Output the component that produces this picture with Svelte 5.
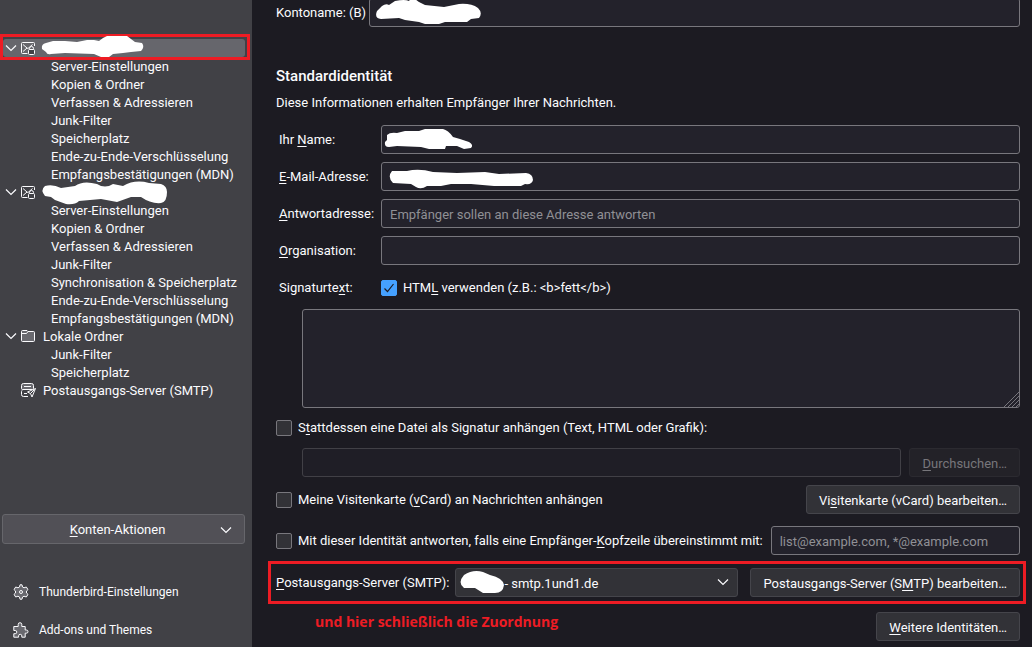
<script lang="ts">
	type Account = {
		name: string;
		icon: 'mail' | 'folder' | 'outgoing';
		scribble?: string;
		selected?: boolean;
		pages: string[];
	};

	const accounts: Account[] = [
		{
			name: '',
			icon: 'mail',
			scribble:
				'M3 4 L10 2 L22 2 L34 3 L44 1 L51 1 L56 2 L60 -1 L64 -3 L84 -3 L92 3 L99 4 Q102 8 98 12 L88 13 L80 14 L70 15 L66 18 L58 18 L51 15 L22 14 L8 15 Q4 16 3 13 L-1 10 Q-2 5 3 4Z',
			selected: true,
			pages: [
				'Server-Einstellungen',
				'Kopien & Ordner',
				'Verfassen & Adressieren',
				'Junk-Filter',
				'Speicherplatz',
				'Ende-zu-Ende-Verschlüsselung',
				'Empfangsbestätigungen (MDN)'
			]
		},
		{
			name: '',
			icon: 'mail',
			scribble:
				'M2 3 Q10 1 18 5 L32 3 Q40 -3 54 1 Q62 6 70 1 L80 3 Q92 -4 106 0 L118 1 Q124 3 124 9 Q124 19 118 20 Q108 21 98 14 L88 14 L74 19 L58 16 L36 18 Q32 22 23 21 L12 17 L8 14 L2 13 Q-3 7 2 3Z',
			pages: [
				'Server-Einstellungen',
				'Kopien & Ordner',
				'Verfassen & Adressieren',
				'Junk-Filter',
				'Synchronisation & Speicherplatz',
				'Ende-zu-Ende-Verschlüsselung',
				'Empfangsbestätigungen (MDN)'
			]
		},
		{ name: 'Lokale Ordner', icon: 'folder', pages: ['Junk-Filter', 'Speicherplatz'] },
		{ name: 'Postausgangs-Server (SMTP)', icon: 'outgoing', pages: [] }
	];

	let accountName = $state('');
	let fullName = $state('');
	let email = $state('');
	let replyTo = $state('');
	let organisation = $state('');
	let signature = $state('');
	let signatureFile = $state('');
	let catchAll = $state('');
	let useHtml = $state(true);
	let attachFile = $state(false);
	let attachVCard = $state(false);
	let useCatchAll = $state(false);
	let smtp = $state('smtp.1und1.de');
</script>

{#snippet chevron()}
	<svg class="chevron" width="12" height="8" viewBox="0 0 12 8" aria-hidden="true">
		<path d="M1 1.5 L6 6.5 L11 1.5" />
	</svg>
{/snippet}

{#snippet scribble(d: string)}
	<svg class="scribble" width="1" height="1" aria-hidden="true"><path {d} /></svg>
{/snippet}

<div class="page">
	<aside>
		<nav class="tree">
			{#each accounts as account}
				<a href="#konto" class="account" class:selected={account.selected} aria-label={account.name || 'Konto'}>
					<span class="twisty">
						{#if account.pages.length}{@render chevron()}{/if}
					</span>
					<svg class="icon" width="16" height="16" viewBox="0 0 16 16" aria-hidden="true">
						{#if account.icon === 'mail'}
							<path d="M7.500 13.500H2.500a1 1 0 0 1-1-1v-9a1 1 0 0 1 1-1h11a1 1 0 0 1 1 1V6" />
							<path d="M3 4.500l4 3.500L3 11.500M7 8l1 .5L12.500 4.500" />
							<rect class="solid" x="8.500" y="9.500" width="6" height="5" rx="1" />
							<path d="M9.500 9.500V8.500a2 2 0 0 1 4 0v1" />
						{:else if account.icon === 'folder'}
							<path
								class="tint"
								d="M1.500 3.500v9a1 1 0 0 0 1 1h11a1 1 0 0 0 1-1v-8a1 1 0 0 0-1-1H8l-1-1H2.500a1 1 0 0 0-1 1z"
							/>
							<path d="M2 5.500h4.500L8 3.500" />
						{:else}
							<path
								class="tint"
								d="M3.500 1.500h8a2 2 0 0 1 2 2v3l-1 1h-10a1 1 0 0 1-1-1v-3a2 2 0 0 1 2-2z"
							/>
							<path d="M4 4.500h7M4 11.500h3M8 14.500H3.500a2 2 0 0 1-2-2v-3a2 2 0 0 1 1-1.500" />
							<path class="solid" d="M15.500 6.500L7.500 10l3 1.500 1.500 3.500z" />
							<path d="M10.500 11.500l4-4" />
						{/if}
					</svg>
					<span class="name">
						{#if account.scribble}{@render scribble(account.scribble)}{/if}{account.name}
					</span>
				</a>
				{#each account.pages as page}
					<a href="#seite" class="subpage">{page}</a>
				{/each}
			{/each}
			<div class="mark"></div>
		</nav>

		<button class="actions" type="button">
			<span><u>K</u>onten-Aktionen</span>
			{@render chevron()}
		</button>

		<div class="links">
			<a href="#einstellungen">
				<svg class="icon" width="16" height="16" viewBox="0 0 16 16" aria-hidden="true">
					<path
						class="tint"
						d="M6.500 3L7 .8h2L9.500 3l1.500.8 2.300-.8 1.700 2.600L13.500 7v2l1.500 1.400-1.700 2.600-2.300-.8-1.500.8L9 15.200H7L6.500 13 5 12.200l-2.300.8L1 10.400 2.500 9V7L1 5.600 2.700 3l2.300.8z"
					/>
					<circle cx="8" cy="8" r="1.500" />
				</svg>
				Thunderbird-Einstellungen
			</a>
			<a href="#addons">
				<svg class="icon" width="16" height="16" viewBox="0 0 16 16" aria-hidden="true">
					<path
						class="tint"
						d="M.8 4.500h4.400V2.500a1.800 1.800 0 1 1 3.600 0v2h3.400v3.500h1.200a1.600 1.600 0 1 1 0 3.200h-1.200v4H8.800v-1.300a1.500 1.500 0 0 0-3.200 0v1.300H.8v-3.500h1.400a1.600 1.600 0 0 0 0-3.200H.8z"
					/>
				</svg>
				Add-ons und Themes
			</a>
		</div>
	</aside>

	<main>
		<div class="row top">
			<label for="account-name">Kontoname: (B)</label>
			<div class="field">
				<input id="account-name" type="text" bind:value={accountName} />
				{@render scribble(
					'M13 8 Q17 5 20 7 L26 3 Q36 1 40 3 Q43 -2 50 4 L56 7 L75 9 L90 6 Q102 5 109 10 Q114 15 110 20 L102 21 L98 24 L76 24 L70 26 H56 L50 24 L36 22 L30 20 L12 21 Q5 20 8 13Z'
				)}
			</div>
		</div>

		<h1>Standardidentität</h1>
		<p>Diese Informationen erhalten Empfänger Ihrer Nachrichten.</p>

		<div class="identity">
			<label for="name">Ihr <u>N</u>ame:</label>
			<div class="field">
				<input id="name" type="text" bind:value={fullName} />
				{@render scribble(
					'M6 10 Q9 7 16 8 L24 6 L38 6 L44 4 H62 Q67 5 72 12 L79 14 L88 17 Q93 20 90 23 L83 24 L76 21 L65 21 L64 24 H48 L40 22 L16 21 L8 22 Q3 22 4 17 L6 15Z'
				)}
			</div>

			<label for="email"><u>E</u>-Mail-Adresse:</label>
			<div class="field">
				<input id="email" type="email" bind:value={email} />
				{@render scribble(
					'M11 9 L26 9 Q38 6 52 10 L76 11 L104 10 L118 12 L145 11 Q152 12 152 18 Q151 23 144 22 L140 24 L113 24 L90 22 H70 L60 24 L46 24 Q40 28 35 25 L30 22 L12 21 Q6 15 11 9Z'
				)}
			</div>

			<label for="reply-to"><u>A</u>ntwortadresse:</label>
			<input
				id="reply-to"
				type="text"
				placeholder="Empfänger sollen an diese Adresse antworten"
				bind:value={replyTo}
			/>

			<label for="organisation"><u>O</u>rganisation:</label>
			<input id="organisation" type="text" bind:value={organisation} />

			<label for="signature">Signaturte<u>x</u>t:</label>
			<label class="check">
				<input type="checkbox" bind:checked={useHtml} />
				<span>HTM<u>L</u> verwenden (z.B.: &lt;b&gt;fett&lt;/b&gt;)</span>
			</label>
		</div>

		<div class="field signature">
			<textarea id="signature" bind:value={signature}></textarea>
			<svg class="grip" width="15" height="15" viewBox="0 0 15 15" aria-hidden="true">
				<path d="M0 15L15 0M4 15L15 4M8 15L15 8M12 15L15 12" />
			</svg>
		</div>

		<label class="check">
			<input type="checkbox" bind:checked={attachFile} />
			<span>S<u>t</u>attdessen eine Datei als Signatur anhängen (Text, HTML oder Grafik):</span>
		</label>

		<div class="row file">
			<input type="text" aria-label="Signaturdatei" disabled bind:value={signatureFile} />
			<button type="button" disabled><u>D</u>urchsuchen…</button>
		</div>

		<div class="row vcard">
			<label class="check">
				<input type="checkbox" bind:checked={attachVCard} />
				<span>Meine Visitenkarte (<u>v</u>Card) an Nachrichten anhängen</span>
			</label>
			<button type="button">Vi<u>s</u>itenkarte (vCard) bearbeiten…</button>
		</div>

		<div class="row catch-all">
			<label class="check">
				<input type="checkbox" bind:checked={useCatchAll} />
				<span>Mit dieser Identität antworten, falls eine Empfänger-<u>K</u>opfzeile übereinstimmt mit:</span>
			</label>
			<input
				type="text"
				aria-label="Empfänger-Kopfzeile"
				placeholder="list@example.com, *@example.com"
				bind:value={catchAll}
			/>
		</div>

		<div class="row smtp">
			<label for="smtp"><u>P</u>ostausgangs-Server (SMTP):</label>
			<div class="field">
				<select id="smtp" bind:value={smtp}>
					<option value="smtp.1und1.de">- smtp.1und1.de</option>
				</select>
				{@render scribble(
					'M9 7 Q18 1 28 4 L35 7 Q48 10 49 17 Q48 25 40 25 H28 L20 20 L9 20 Q2 15 9 7Z'
				)}
				{@render chevron()}
			</div>
			<button type="button">Postausgangs-Server (S<u>M</u>TP) bearbeiten…</button>
			<div class="mark"></div>
		</div>

		<div class="row more">
			<span class="note">und hier schließlich die Zuordnung</span>
			<button type="button"><u>W</u>eitere Identitäten…</button>
		</div>
	</main>
</div>

<style>
	:global(body) {
		background: #1c1b22;
	}

	.page {
		display: grid;
		grid-template-columns: 252px 1fr;
		height: 100vh;
		overflow: hidden;
		color: #fbfbfe;
		font: 13px/19px Roboto, 'Noto Sans', sans-serif;
	}

	a {
		color: inherit;
		text-decoration: none;
	}

	u {
		text-underline-offset: 2px;
		text-decoration-skip-ink: none;
	}

	aside {
		display: flex;
		flex-direction: column;
		background: #414146;
	}

	.tree {
		position: relative;
		flex: 1;
		display: flex;
		flex-direction: column;
		padding-top: 39px;
		line-height: 20px;
	}

	.account {
		display: flex;
		align-items: center;
		height: 18px;
		margin: 0 7px 0 3px;
		border-radius: 3px;
	}

	.account.selected {
		background: #66666c;
	}

	.twisty {
		display: flex;
		width: 17px;
		padding-left: 2px;
		box-sizing: border-box;
	}

	.name {
		position: relative;
		height: 18px;
		margin-left: 7px;
	}

	.subpage {
		height: 18px;
		padding-left: 51px;
		white-space: nowrap;
	}

	.icon {
		flex: none;
		fill: none;
		stroke: #fbfbfe;
		stroke-width: 1;
	}

	.tint {
		fill: #69696f;
	}

	.solid {
		fill: #414146;
	}

	.chevron {
		flex: none;
		fill: none;
		stroke: #fbfbfe;
		stroke-width: 1.2;
	}

	.scribble {
		position: absolute;
		top: 0;
		left: 0;
		overflow: visible;
		fill: #fff;
		pointer-events: none;
		z-index: 1;
	}

	.mark {
		position: absolute;
		border: 3px solid #ed1c24;
		pointer-events: none;
	}

	.tree .mark {
		inset: 34px 2px auto 0;
		height: 20px;
	}

	button,
	input,
	select,
	textarea {
		box-sizing: border-box;
		margin: 0;
		border-radius: 3px;
		color: inherit;
		font: inherit;
	}

	button,
	select {
		height: 29px;
		padding: 1px 12px 0;
		border: 1px solid #45454b;
		background: #323237;
		white-space: nowrap;
	}

	.actions {
		display: flex;
		align-items: center;
		height: 30px;
		margin: 0 7px 31px 2px;
		border-color: #66666b;
		background: #515056;
	}

	.actions span {
		flex: 1;
	}

	.links {
		display: flex;
		flex-direction: column;
		gap: 4px;
		font-size: 12px;
	}

	.links a {
		display: flex;
		align-items: center;
		gap: 10px;
		height: 34px;
		padding-left: 13px;
	}

	main {
		min-width: 0;
		padding: 0 12px 0 24px;
	}

	input,
	textarea {
		width: 100%;
		border: 1px solid #78777d;
		background: #23222b;
	}

	input {
		height: 29px;
		padding: 1px 8px 0;
	}

	::placeholder {
		color: #909095;
		opacity: 1;
	}

	input:disabled {
		border-color: #414046;
		background: #1f1e26;
	}

	button:disabled {
		border-color: #2b2a30;
		background: #232228;
		color: #77767b;
	}

	input[type='checkbox'] {
		appearance: none;
		flex: none;
		width: 16px;
		height: 16px;
		padding: 0;
		border-radius: 2px;
		background: #323237;
	}

	input[type='checkbox']:checked {
		border-color: #45a1ff;
		background: #45a1ff
			url("data:image/svg+xml,%3Csvg xmlns='http://www.w3.org/2000/svg' viewBox='0 0 14 14'%3E%3Cpath d='M2.500 7.500l3 3 6-7.500' fill='none' stroke='%231c1b22' stroke-width='1.200'/%3E%3C/svg%3E");
	}

	.check {
		display: flex;
		align-items: center;
		gap: 6px;
		white-space: nowrap;
	}

	.row {
		display: flex;
		align-items: center;
	}

	.row label {
		flex: none;
	}

	.field {
		position: relative;
		flex: 1;
		display: flex;
	}

	.top {
		gap: 3px;
		margin-top: -2px;
	}

	h1 {
		margin: 39px 0 7px;
		font-size: 15px;
		line-height: 20px;
		font-weight: 500;
	}

	p {
		margin: 0 0 13px;
	}

	.identity {
		display: grid;
		grid-template-columns: 94px 1fr;
		grid-auto-rows: 29px;
		gap: 8px;
		align-items: center;
		padding-left: 3px;
	}

	.signature {
		margin: 7px 0 10px 26px;
	}

	textarea {
		display: block;
		height: 99px;
		padding: 8px;
		resize: none;
	}

	.grip {
		position: absolute;
		right: 1px;
		bottom: 1px;
		stroke: #77767c;
	}

	.file {
		gap: 8px;
		margin: 11px 0 8px 26px;
	}

	.vcard {
		justify-content: space-between;
		margin-bottom: 12px;
	}

	.catch-all {
		gap: 8px;
		margin-bottom: 13px;
	}

	.smtp {
		position: relative;
		gap: 12px;
		margin-bottom: 15px;
	}

	.smtp label {
		margin-right: -6px;
	}

	.smtp select {
		appearance: none;
		width: 100%;
		padding-left: 48px;
	}

	.smtp .chevron {
		position: absolute;
		top: 10px;
		right: 9px;
		pointer-events: none;
	}

	.smtp .mark {
		inset: -7px -6px -7px -8px;
	}

	.more {
		justify-content: space-between;
		padding-left: 39px;
	}

	.note {
		padding-bottom: 10px;
		color: #ed1c24;
		font: 700 14px/19px 'Open Sans', 'Noto Sans', sans-serif;
	}
</style>
